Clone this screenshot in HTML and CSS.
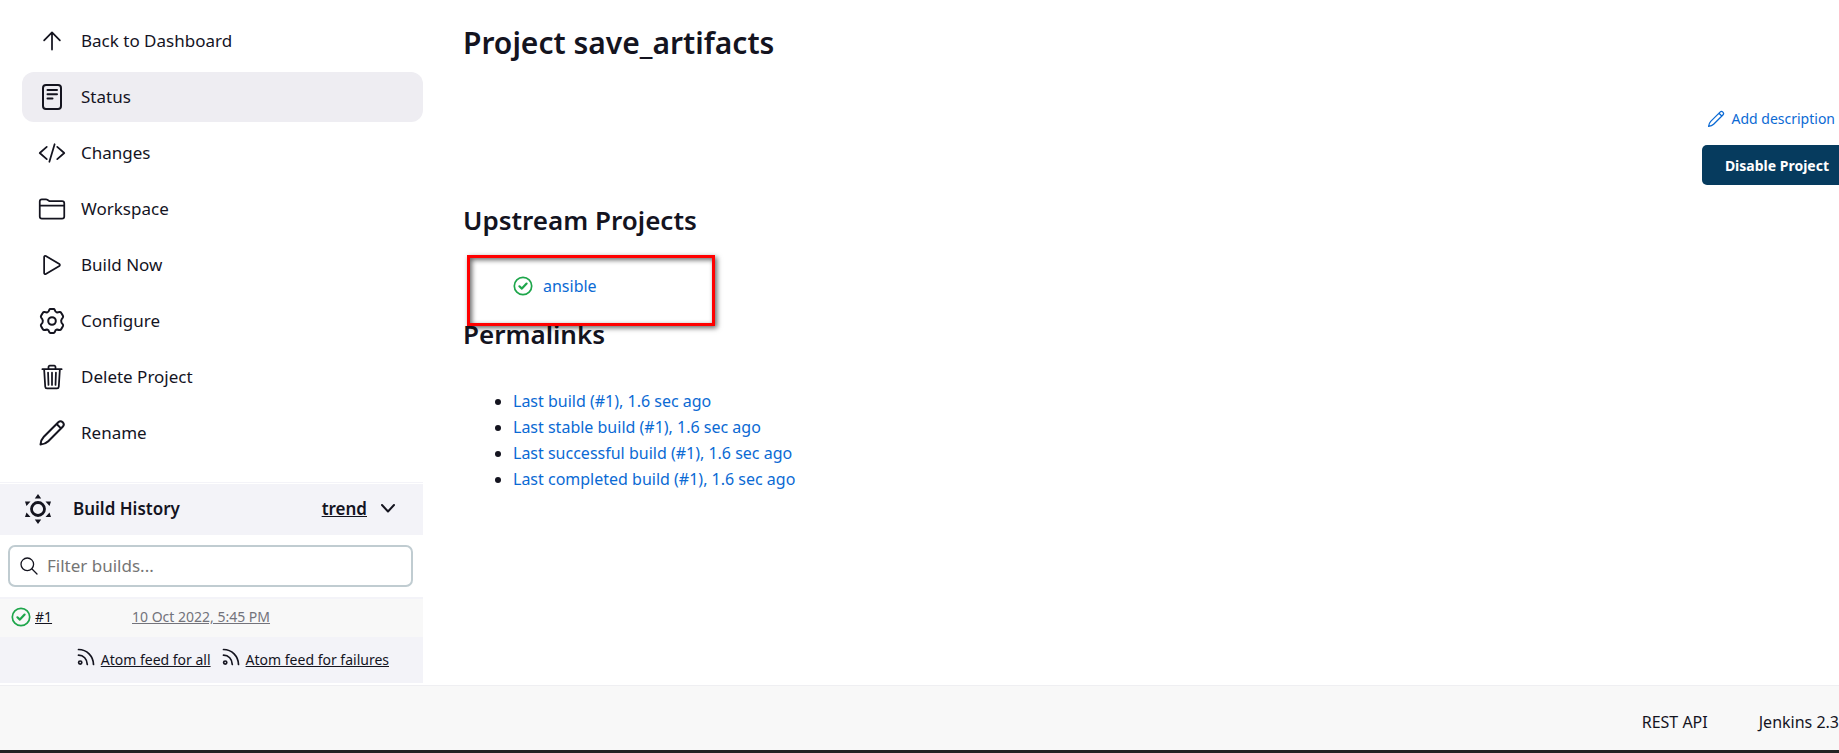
FILE: index.html
```html
<!DOCTYPE html>
<html lang="en">
<head>
<meta charset="utf-8">
<title>save_artifacts [Jenkins]</title>
<link rel="stylesheet" href="styles.css">
</head>
<body>
<svg class="defs" aria-hidden="true">
  <symbol id="pencil" viewBox="0 0 28 28"><path d="M2.500 25.500Q3 20.500 5.800 17.700L20.300 3.300a3 3 0 0 1 4.400 4.400L10.300 22.200Q7.500 25 2.500 25.500zM18.600 5l4.400 4.400"/></symbol>
  <symbol id="ok" viewBox="0 0 20 20"><circle cx="10" cy="10" r="8.700" stroke-width="1.700"/><path d="M6.400 10.300l2.500 2.300 4.700-5" stroke-width="2.200"/></symbol>
  <symbol id="feed" viewBox="0 0 18 18"><circle cx="3.200" cy="14.600" r="1.600"/><path d="M1.500 7.200c5 0 8.600 3.800 8.800 9.300M1.500 1.500c8.400 0 14.800 6.700 15 15"/></symbol>
</svg>
<div class="page">
  <aside class="side">
    <nav class="tasks">
      <a class="task" href="#"><svg class="icon" viewBox="0 0 512 512"><path d="M112 244l144-144 144 144M256 120v292"/></svg>Back to Dashboard</a>
      <a class="task active" href="#"><svg class="icon small-units" viewBox="0 0 28 28"><rect x="5" y="2" width="18" height="24" rx="3"/><path d="M9.500 7h9.500M9.500 11.300h9.500M9.500 15.600h5"/></svg>Status</a>
      <a class="task" href="#"><svg class="icon" viewBox="0 0 512 512"><path d="M160 368L32 256l128-112M352 368l128-112-128-112M304 96l-96 320"/></svg>Changes</a>
      <a class="task" href="#"><svg class="icon" viewBox="0 0 512 512"><path d="M440 432H72a40 40 0 01-40-40V120a40 40 0 0140-40h75.890a40 40 0 0122.190 6.720l27.840 18.560a40 40 0 0022.190 6.720H440a40 40 0 0140 40v240a40 40 0 01-40 40zM32 192h448"/></svg>Workspace</a>
      <a class="task" href="#"><svg class="icon" viewBox="0 0 512 512"><path d="M112 111v290c0 17.440 17 28.520 31 20.160l247.900-148.370c12.120-7.250 12.120-26.330 0-33.580L143 90.840c-14-8.360-31 2.720-31 20.160z"/></svg>Build Now</a>
      <a class="task" href="#"><svg class="icon small-units" viewBox="0 0 28 28"><circle cx="14" cy="14" r="3.800"/><path d="M11.300 2.800Q11.600 2 12.400 2h3.200Q16.400 2 16.700 2.800 17.300 5.200 18.900 5.500 20.700 4.800 22 5 22.900 5.200 23.300 6L24.900 8.800Q25.400 9.800 24.800 10.600 23 12.500 23.200 14 23 15.500 24.800 17.400 25.400 18.200 24.900 19.200L23.300 22Q22.900 22.800 22 23 20.700 23.200 18.900 22.500 17.300 22.800 16.700 25.200 16.400 26 15.600 26h-3.200Q11.600 26 11.300 25.200 10.700 22.800 9.100 22.500 7.300 23.200 6 23 5.100 22.800 4.700 22L3.100 19.200Q2.600 18.200 3.200 17.400 5 15.500 4.800 14 5 12.500 3.200 10.600 2.600 9.800 3.100 8.800L4.700 6Q5.100 5.200 6 5 7.300 4.800 9.100 5.500 10.700 5.200 11.300 2.800z"/></svg>Configure</a>
      <a class="task" href="#"><svg class="icon" viewBox="0 0 512 512"><path d="M112 112l20 320c.950 18.490 14.400 32 32 32h184c17.670 0 30.870-13.510 32-32l20-320M80 112h352M192 112V72a23.930 23.930 0 0124-24h80a23.930 23.930 0 0124 24v40M256 176v224M184 176l8 224M328 176l-8 224"/></svg>Delete Project</a>
      <a class="task" href="#"><svg class="icon small-units"><use href="#pencil"/></svg>Rename</a>
    </nav>
    <section class="history">
      <header class="history-head">
        <svg class="sun" viewBox="0 0 28 32"><circle cx="14" cy="16" r="6.500" fill="none" stroke="currentColor" stroke-width="2.800"/><path d="M14 1l3.200 4.500h-6.400zM14 31l3.200-4.500h-6.400zM1 8.500h5.500L2.500 13zM27 8.500h-5.500l4 4.500zM1 24h5.500l-4-4.500zM27 24h-5.500l4-4.500z"/></svg>
        <h2 class="history-title">Build History</h2>
        <a class="trend" href="#">trend</a>
        <svg class="chevron" viewBox="0 0 14 9"><path d="M1 1l6 6.500L13 1"/></svg>
      </header>
      <div class="filter-wrap">
        <label class="filter"><svg class="search" viewBox="0 0 18 18"><circle cx="7.300" cy="7.300" r="6.300"/><path d="M12 12l5 5"/></svg><input class="filter-input" type="text" placeholder="Filter builds..." aria-label="Filter builds"></label>
      </div>
      <div class="build"><svg class="ok"><use href="#ok"/></svg><a class="build-no" href="#">#1</a><a class="build-date" href="#">10 Oct 2022, 5:45 PM</a></div>
      <div class="feeds">
        <a class="feed" href="#"><svg class="feed-icon"><use href="#feed"/></svg><span class="feed-text">Atom feed for all</span></a>
        <a class="feed" href="#"><svg class="feed-icon"><use href="#feed"/></svg><span class="feed-text">Atom feed for failures</span></a>
      </div>
    </section>
  </aside>
  <main class="main">
    <h1 class="title">Project save_artifacts</h1>
    <div class="actions">
      <a class="describe" href="#"><svg class="describe-icon"><use href="#pencil"/></svg>Add description</a>
      <button class="disable" type="button">Disable Project</button>
    </div>
    <h2 class="heading">Upstream Projects</h2>
    <div class="upstream"><svg class="ok"><use href="#ok"/></svg><a class="link" href="#">ansible</a><div class="marker"></div></div>
    <h2 class="heading">Permalinks</h2>
    <ul class="links">
      <li><a class="link" href="#">Last build (#1), 1.6 sec ago</a></li>
      <li><a class="link" href="#">Last stable build (#1), 1.6 sec ago</a></li>
      <li><a class="link" href="#">Last successful build (#1), 1.6 sec ago</a></li>
      <li><a class="link" href="#">Last completed build (#1), 1.6 sec ago</a></li>
    </ul>
  </main>
</div>
<footer class="footer"><a class="foot-link" href="#">REST API</a><a class="foot-link" href="#">Jenkins 2.3</a></footer>
</body>
</html>
```
FILE: styles.css
```css
* { box-sizing: border-box; }
body {
  margin: 0;
  min-height: 100vh;
  display: flex;
  flex-direction: column;
  overflow: hidden;
  background: #fff;
  color: #14141f;
  font: 17px/26px "Noto Sans", "Open Sans", sans-serif;
}
a { color: inherit; text-decoration: none; }
h1, h2, ul { margin: 0; }
svg { flex: none; fill: none; stroke: currentColor; stroke-linecap: round; stroke-linejoin: round; }
.defs { position: absolute; width: 0; height: 0; }
.page { flex: 1; display: grid; grid-template-columns: 423px 1fr; }
.side { display: flex; flex-direction: column; }
.tasks { display: flex; flex-direction: column; gap: 6px; padding: 16px 0 0 22px; }
.task { display: flex; align-items: center; gap: 15px; height: 50px; padding: 0 16px; border-radius: 12px; }
.task.active { background: #eeedf2; }
.icon { width: 28px; height: 28px; stroke-width: 32; }
.small-units { stroke-width: 2; }
.history { margin-top: 24px; border-top: 1px solid #f3f3f8; padding-top: 1px; }
.history-head { display: flex; align-items: center; height: 51px; padding: 0 28px 2px 24px; background: #f3f3f8; }
.sun { width: 28px; height: 32px; fill: currentColor; stroke: none; }
.history-title { flex: 1; margin-left: 21px; font-size: 17px; font-weight: 600; }
.trend { font-weight: 600; text-decoration: underline; }
.chevron { width: 14px; height: 9px; margin-left: 14px; stroke-width: 2; }
.filter-wrap { padding: 10px 10px 10px 8px; }
.filter { display: flex; align-items: center; gap: 9px; height: 42px; padding: 0 10px; border: 2px solid #c0ccd1; border-radius: 7px; }
.search { width: 18px; height: 18px; stroke-width: 1.3; }
.filter-input { flex: 1; min-width: 0; padding: 0; border: 0; outline: 0; background: none; color: inherit; font: inherit; }
.filter-input::placeholder { color: #757575; opacity: 1; }
.build { display: flex; align-items: center; height: 40px; padding: 0 11px 3px; border-top: 2px solid #f3f3f8; background: #f8f8f8; font-size: 14px; }
.ok { width: 20px; height: 20px; color: #1ea64b; }
.build-no { width: 97px; margin-left: 4px; text-decoration: underline; }
.build-date { color: #73737b; text-decoration: underline; }
.feeds { display: flex; justify-content: flex-end; gap: 11px; padding: 10px 34px; background: #f3f3f8; font-size: 14px; }
.feed { display: flex; gap: 6px; }
.feed-icon { width: 18px; height: 18px; margin-top: 1px; stroke-width: 1.7; }
.feed-text { text-decoration: underline; }
.main { padding: 23px 0 0 40px; }
.title { font-size: 30px; line-height: 40px; font-weight: 600; }
.actions { display: flex; flex-direction: column; align-items: flex-end; gap: 13px; margin-top: 43px; font-size: 14px; }
.describe { display: flex; align-items: center; gap: 6px; padding-right: 4px; color: #0b6ad4; }
.describe-icon { width: 18px; height: 18px; stroke-width: 2; }
.disable { height: 40px; padding: 0 10px 0 23px; border: 0; border-radius: 5px 0 0 5px; background: #063b5e; color: #fff; font: 700 14px "Noto Sans", "Open Sans", sans-serif; }
.heading { font-size: 26px; line-height: 34px; font-weight: 600; }
.actions + .heading { margin-top: 18px; }
.upstream { position: relative; display: flex; align-items: center; gap: 10px; height: 80px; padding: 17px 0 0 50px; font-size: 16px; }
.marker { position: absolute; left: 4px; top: 18px; width: 248px; height: 71px; border: 3px solid #f00; box-shadow: 2px 2px 5px #0009, inset 2px 2px 5px #0009; }
.link { color: #0b6ad4; }
.links { margin-top: 37px; padding-left: 50px; font-size: 16px; }
.footer { display: flex; justify-content: flex-end; gap: 51px; height: 68px; padding: 23px 0 0; border-top: 1px solid #efeff2; border-bottom: 3px solid #222; background: #f8f8f8; font-size: 16px; }
```
